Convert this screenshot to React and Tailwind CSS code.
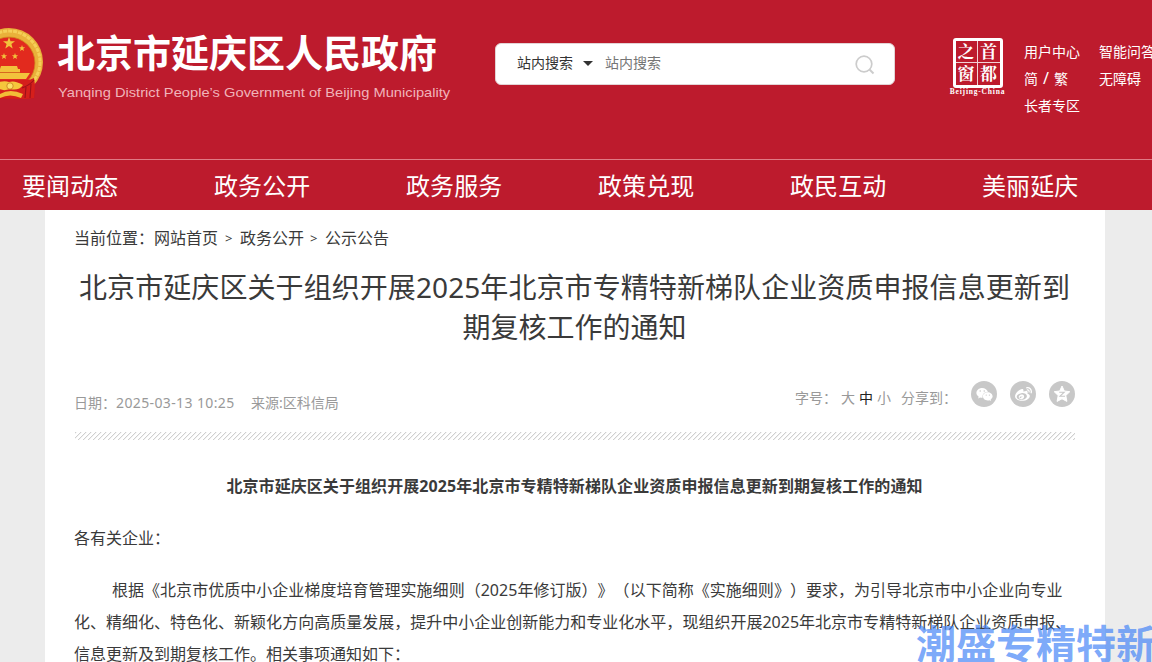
import { FaWeixin, FaWeibo } from "react-icons/fa";

const navItems = ["要闻动态", "政务公开", "政务服务", "政策兑现", "政民互动", "美丽延庆"];

const Emblem = () => (
  <svg width="44" height="76" viewBox="0 0 44 76" className="block shrink-0">
    <path d="M-16 50 L33 50 L35 58 L34 71 L24 72 L-10 72 Z" fill="#c8161a" />
    <circle cx="9" cy="35" r="34" fill="#e9b13a" />
    <circle cx="9" cy="35" r="31" fill="none" stroke="#f5cf58" strokeWidth="3" strokeDasharray="4 1" />
    <circle cx="9" cy="36" r="26" fill="#e22a1e" stroke="#d08a20" strokeWidth="0.8" />
    <g fill="#f2c23c">
      <path d="M9 10 l1.5 4.3 4.5 0 -3.6 2.8 1.3 4.4 -3.7 -2.6 -3.7 2.6 1.3 -4.4 -3.6 -2.8 4.5 0z" />
      <path d="M22 18 l.8 2.2 2.3 0 -1.8 1.5 .7 2.3 -2 -1.3 -2 1.3 .7 -2.3 -1.8 -1.5 2.3 0z" />
      <path d="M15 26 l.8 2.2 2.3 0 -1.8 1.5 .7 2.3 -2 -1.3 -2 1.3 .7 -2.3 -1.8 -1.5 2.3 0z" />
      <path d="M4 26 l.8 2.2 2.3 0 -1.8 1.5 .7 2.3 -2 -1.3 -2 1.3 .7 -2.3 -1.8 -1.5 2.3 0z" />
      <path d="M1 39 H17 L18 42 H20 V45 H-2 V42 H0z" />
      <path d="M-2 46 H30 L26 52 H-4z" />
    </g>
    <path d="M-2 45.5 H20" stroke="#d5781f" strokeWidth="0.8" />
    {/* 绶带 */}
    <path d="M-4 53 H26 Q31 53 34 51 L35 58 L34 71 L24 72 L-4 71z" fill="#d51f1b" />
    <path d="M22 61 Q30 58 34 53 M26 60 L25 71 M31 57 L30 71" fill="none" stroke="#9d1019" strokeWidth="1.1" />
    <path d="M-4 56 Q4 53 9 55 Q15 53 23 58 Q19 64 10 62 Q2 65 -4 60z" fill="#f5c63c" />
    <circle cx="10" cy="59" r="3.2" fill="#fbe066" stroke="#c87b1b" strokeWidth="0.8" />
    <path d="M0 67 Q10 61 23 67 L21 71 Q10 66 0 71z" fill="#f2bd37" />
  </svg>
);

const QzoneIcon = () => (
  <svg width="18" height="18" viewBox="0 0 18 18">
    <path
      d="M9 1 L11.3 6 L16.8 6.7 L12.8 10.5 L13.9 16.4 L9 13.8 L4.1 16.4 L5.2 10.5 L1.2 6.7 L6.7 6z"
      fill="#fff"
      stroke="#fff"
      strokeLinejoin="round"
    />
    <path d="M6.2 7.2 H11.2 L7 11.2 H12" fill="none" stroke="#c8c8c8" strokeWidth="1.1" />
  </svg>
);

const Header = () => (
  <header className="bg-[#bd1b2d] text-white">
    <div className="h-[159px] flex items-start">
      <div className="pt-[27px]">
        <Emblem />
      </div>
      <div className="ml-[13px] w-[438px] shrink-0 pt-[24px] whitespace-nowrap">
        <h1 className="text-[38px] leading-[56px] font-bold">北京市延庆区人民政府</h1>
        <p className="mt-[5px] ml-px w-fit origin-left scale-x-[1.13] text-[13px] leading-4 text-[#f0b4ba] font-['Liberation_Sans',sans-serif]">
          Yanqing District People’s Government of Beijing Municipality
        </p>
      </div>

      {/* 搜索 */}
      <div className="mt-[43px] h-[42px] w-[400px] shrink-0 rounded-md bg-white border border-[#e3d3d5] flex items-center text-sm leading-5 pb-[2px]">
        <span className="ml-[21px] text-[#333]">站内搜索</span>
        <span className="ml-[10px] border-x-5 border-t-5 border-x-transparent border-t-[#333]"></span>
        <span className="ml-[12px] text-[#757575]">站内搜索</span>
        <svg width="20" height="20" viewBox="0 0 20 20" className="ml-auto mr-[19px] mt-[3px]" fill="none" stroke="#ccc" strokeWidth="1.7">
          <circle cx="9" cy="9" r="7.8" />
          <path d="M14.5 14.5 L18.5 18.5" strokeWidth="2" />
        </svg>
      </div>

      {/* 首都之窗 */}
      <div className="mt-[38px] ml-[52px] w-[61px] shrink-0 flex flex-col items-center">
        <div className="w-[50px] h-[50px] rounded-[3px] border-3 border-white grid grid-cols-2 grid-rows-2 text-[17px] leading-[20px] text-center font-bold font-['Noto_Serif_CJK_SC','Noto_Sans_CJK_SC',serif]">
          <span className="border-r border-b border-white/80">之</span>
          <span className="border-b border-white/80">首</span>
          <span className="border-r border-white/80">窗</span>
          <span>都</span>
        </div>
        <span className="text-[7.5px] leading-[8px] tracking-[0.8px] font-bold font-['Liberation_Serif',serif]">Beijing-China</span>
      </div>

      <div className="mt-[38px] ml-[16px] flex gap-[19px] text-sm leading-[27px] whitespace-nowrap">
        <div>
          <p>用户中心</p>
          <p>简<span className="text-base leading-none mx-[5px]">/</span>繁</p>
          <p>长者专区</p>
        </div>
        <div>
          <p>智能问答</p>
          <p>无障碍</p>
        </div>
      </div>
    </div>

    <nav className="border-t border-[#e07a84] h-[51px] flex pl-[22px]">
      {navItems.map((item) => (
        <a key={item} className="w-[192px] shrink-0 text-2xl leading-[51px] tracking-[0.1px]">{item}</a>
      ))}
    </nav>
  </header>
);

const App = () => {
  return (
    <div
      lang="zh-CN"
      className="relative w-[1152px] h-[662px] overflow-hidden bg-[#ececec] text-[#3a3a3a] [text-spacing-trim:space-all] font-['Noto_Sans','Noto_Sans_CJK_SC',sans-serif]"
    >
      <Header />

      <main className="ml-[45px] w-[1060px] h-[452px] bg-white pl-[29px] pr-[30px] whitespace-nowrap">
        <div className="pt-[16px] text-base leading-6 flex">
          <span className="w-[151px]">当前位置：网站首页</span>
          <span className="w-[15px] text-[13px]">&gt;</span>
          <span className="w-[70px]">政务公开</span>
          <span className="w-[15px] text-[13px]">&gt;</span>
          <span>公示公告</span>
        </div>

        <h2 className="mt-[17px] text-[28px] leading-10 text-center">
          <span className="tracking-[0.08px]">北京市延庆区关于组织开展2025年北京市专精特新梯队企业资质申报信息更新到</span>
          <br />
          期复核工作的通知
        </h2>

        {/* 日期、来源、分享 */}
        <div className="mt-[34px] h-[51px] flex justify-between text-sm text-[#999]">
          <div className="pt-[10px] leading-6 flex">
            <span className="w-[42px]">日期：</span>
            <span className="w-[135px] tracking-[0.38px]">2025-03-13 10:25</span>
            <span>来源:区科信局</span>
          </div>
          <div className="flex">
            <div className="pt-[5px] leading-6 flex">
              <span className="w-[46px]">字号：</span>
              <span className="w-[18px]">大</span>
              <span className="w-[18px] text-[#222]">中</span>
              <span className="w-[24px]">小</span>
              <span className="w-[70px]">分享到：</span>
            </div>
            <div className="flex gap-[13px]">
              <span className="w-[26px] h-[26px] rounded-full bg-[#c8c8c8] text-white flex items-center justify-center">
                <FaWeixin size={17} />
              </span>
              <span className="w-[26px] h-[26px] rounded-full bg-[#c8c8c8] text-white flex items-center justify-center">
                <FaWeibo size={17} />
              </span>
              <span className="w-[26px] h-[26px] rounded-full bg-[#c8c8c8] flex items-center justify-center">
                <QzoneIcon />
              </span>
            </div>
          </div>
        </div>

        <div className="ml-px w-[1000px] h-2 bg-[repeating-linear-gradient(135deg,#cfcfcf_0px,#cfcfcf_0.8px,#fff_1.6px,#fff_3.536px)]"></div>

        {/* 正文 */}
        <article className="text-base leading-8">
          <p className="mt-[30px] text-center font-bold tracking-[0.08px]">
            北京市延庆区关于组织开展2025年北京市专精特新梯队企业资质申报信息更新到期复核工作的通知
          </p>
          <p className="mt-[20px]">各有关企业：</p>
          <p className="mt-[20px] pl-[38px] tracking-[0.03px]">
            根据《北京市优质中小企业梯度培育管理实施细则（2025年修订版）》（以下简称《实施细则》）要求，为引导北京市中小企业向专业
          </p>
          <p className="tracking-[0.01px]">
            化、精细化、特色化、新颖化方向高质量发展，提升中小企业创新能力和专业化水平，现组织开展2025年北京市专精特新梯队企业资质申报、
          </p>
          <p>信息更新及到期复核工作。相关事项通知如下：</p>
        </article>
      </main>

      <div className="absolute left-[916px] top-[615px] text-[40px] leading-[58px] font-bold text-[#4484f7]/70 whitespace-nowrap">
        潮盛专精特新
      </div>
    </div>
  );
};

export default App;
